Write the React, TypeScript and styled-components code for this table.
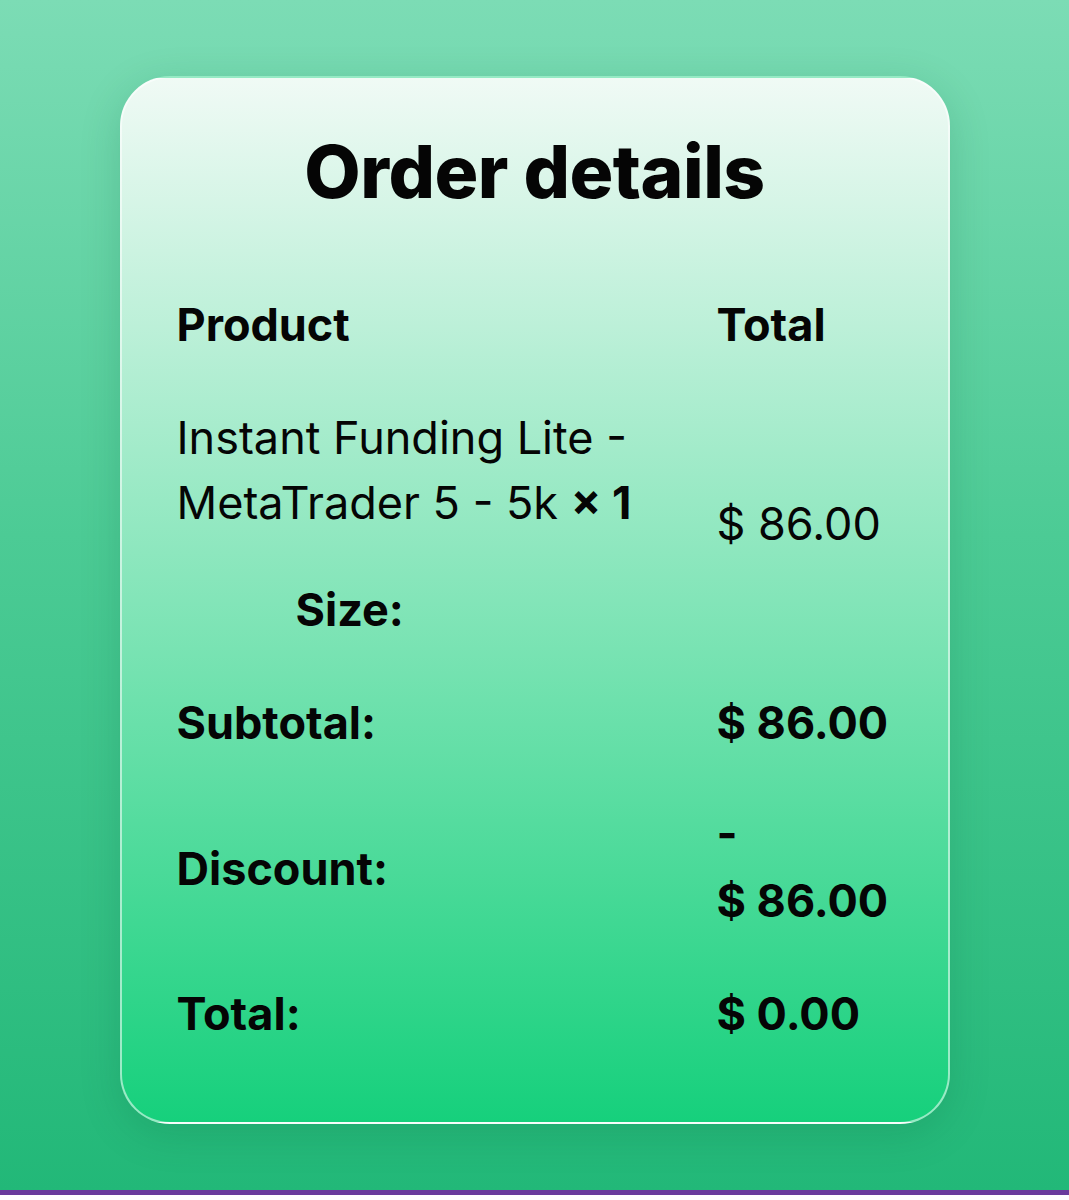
import React from 'react';
import styled, { createGlobalStyle } from 'styled-components';

const GlobalStyle = createGlobalStyle`
    html, body {
        margin: 0;
        padding: 0;
    }
    body {
        font-family: Inter, "Noto Sans", "Liberation Sans", sans-serif;
        color: #050505;
    }
`;

const Page = styled.div`
    height: 1195px;
    display: flex;
    justify-content: center;
    align-items: flex-start;
    padding-top: 76px;
    box-sizing: border-box;
    background: linear-gradient(180deg, #7cdcb5 0%, #4ccb95 45%, #22b878 100%);
    border-bottom: 5px solid #6a3b9c;
`;

const Card = styled.section`
    width: 830px;
    height: 1048px;
    box-sizing: border-box;
    padding: 51px 55px;
    border-radius: 50px;
    border: 2px solid rgba(255, 255, 255, 0.55);
    background: linear-gradient(180deg, #f0faf5 0%, #16d07c 100%);
    box-shadow: 0 10px 40px rgba(10, 90, 55, 0.18);
`;

const Title = styled.h2`
    margin: 0 0 53px;
    font-size: 73px;
    line-height: 86px;
    font-weight: 800;
    text-align: center;
    letter-spacing: -0.5px;
`;

const Row = styled.div<{ $bold?: boolean }>`
    display: grid;
    grid-template-columns: 540px 176px;
    align-items: center;
    padding: 24px 0;
    font-size: 45px;
    line-height: 65px;
    font-weight: ${(p) => (p.$bold ? 700 : 400)};
`;

const Cell = styled.div`
    padding-right: 24px;
`;

const ItemName = styled.div`
    font-weight: 400;
`;

const Qty = styled.strong`
    font-weight: 700;
`;

const Meta = styled.ul`
    list-style: none;
    margin: 42px 0 0;
    padding-left: 119px;
    font-weight: 700;
`;

const Amount = styled.div<{ $bold?: boolean }>`
    font-weight: ${(p) => (p.$bold ? 700 : 400)};
`;

const NoWrap = styled.span`
    white-space: nowrap;
`;

export default function App() {
    return (
        <>
            <GlobalStyle />
            <Page>
                <Card>
                    <Title>Order details</Title>
                    <Row $bold>
                        <Cell>Product</Cell>
                        <Amount $bold>Total</Amount>
                    </Row>
                    <Row>
                        <Cell>
                            <ItemName>
                                Instant Funding Lite - MetaTrader 5 - 5k <Qty>×&nbsp;1</Qty>
                            </ItemName>
                            <Meta>
                                <li>Size:</li>
                            </Meta>
                        </Cell>
                        <Amount>
                            <NoWrap>$ 86.00</NoWrap>
                        </Amount>
                    </Row>
                    <Row $bold>
                        <Cell>Subtotal:</Cell>
                        <Amount $bold>
                            <NoWrap>$ 86.00</NoWrap>
                        </Amount>
                    </Row>
                    <Row $bold>
                        <Cell>Discount:</Cell>
                        <Amount $bold>
                            - <NoWrap>$ 86.00</NoWrap>
                        </Amount>
                    </Row>
                    <Row $bold>
                        <Cell>Total:</Cell>
                        <Amount $bold>
                            <NoWrap>$ 0.00</NoWrap>
                        </Amount>
                    </Row>
                </Card>
            </Page>
        </>
    );
}
